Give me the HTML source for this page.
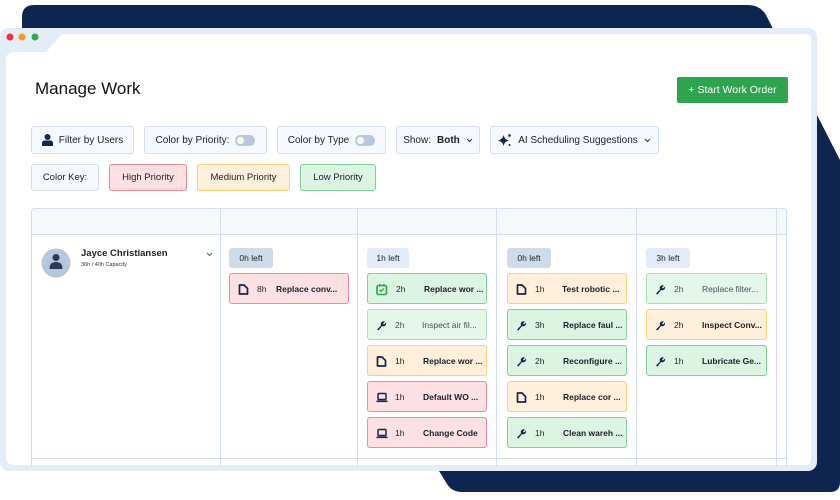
<!DOCTYPE html>
<html><head><meta charset="utf-8">
<style>
*{box-sizing:border-box;margin:0;padding:0}
body{width:840px;height:500px;background:#fff;position:relative;overflow:hidden;font-family:"Liberation Sans",sans-serif;color:#1b1f2a}
.a{position:absolute}
.btn{position:absolute;top:126px;height:28px;background:#f5f8fd;border:1px solid #d5dfee;border-radius:3px;font-size:10px;display:flex;align-items:center;justify-content:center;gap:6px;color:#1b1f2a}
.key{position:absolute;top:164px;height:27px;border:1px solid #d5dfee;border-radius:3px;font-size:9.5px;display:flex;align-items:center;justify-content:center;background:#f5f8fd}
.tog{width:20px;height:11px;border-radius:6px;background:#b9c7dc;position:relative;display:inline-block}
.tog:after{content:"";position:absolute;left:2px;top:2px;width:7px;height:7px;border-radius:50%;background:#fff}
.badge{position:absolute;top:248px;height:20px;border-radius:3px;font-size:8.5px;display:flex;align-items:center;justify-content:center;color:#1b1f2a}
.card{position:absolute;height:31px;border-radius:3px;border:1px solid;font-size:8.5px;font-weight:bold}
.card svg{position:absolute;left:8px;top:10px}
.card .h{position:absolute;top:10px;font-weight:normal}
.card .t{position:absolute;top:10px;white-space:nowrap}
.r{background:#fde0e3;border-color:#f08a94}
.o{background:#ffefdb;border-color:#f6d57e}
.g{background:#dcf5e3;border-color:#82cf98}
.l{background:#e5f7ea;border-color:#a9dfb7;color:#4a4f5a;font-weight:normal!important}
.l .t{font-weight:normal}
</style></head><body>
<svg class="a" style="left:0;top:0" width="840" height="500">
<path d="M34 5 L748 5 Q760 5 766 15 L840 160 L840 482 Q840 492 830 492 L462 492 Q452 492 447 484 L420 440 L22 440 L22 17 Q22 5 34 5Z" fill="#0e2550"/>
<rect x="0" y="28" width="817" height="443" rx="9" fill="#e4ecf8"/>
<path d="M62 34 L805 34 Q811 34 811 40 L811 459 Q811 465 805 465 L14 465 Q6 465 6 457 L6 60 Q6 52 14 52 L46 52 Z" fill="#fff"/>
<circle cx="10" cy="37" r="3.5" fill="#e8323c"/>
<circle cx="22" cy="37" r="3.5" fill="#f39a25"/>
<circle cx="35" cy="37" r="3.5" fill="#2fa84f"/>
<!-- table -->
<rect x="31.5" y="208.5" width="755" height="26" fill="#f5f8fd"/>
<path d="M31.5 466 L31.5 212 Q31.5 208.5 35 208.5 L783 208.5 Q786.5 208.5 786.5 212 L786.5 466" fill="none" stroke="#d3dfee"/>
<line x1="31" y1="234.5" x2="787" y2="234.5" stroke="#d3dfee"/>
<line x1="31" y1="458.5" x2="787" y2="458.5" stroke="#d3dfee"/>
<line x1="220.5" y1="208" x2="220.5" y2="466" stroke="#d3dfee"/>
<line x1="357.5" y1="208" x2="357.5" y2="466" stroke="#d3dfee"/>
<line x1="496.5" y1="208" x2="496.5" y2="466" stroke="#d3dfee"/>
<line x1="636.5" y1="208" x2="636.5" y2="466" stroke="#d3dfee"/>
<line x1="776.5" y1="208" x2="776.5" y2="466" stroke="#d3dfee"/>
<circle cx="56" cy="263" r="14.5" fill="#b6c6dc"/>
<circle cx="56" cy="257.5" r="3.5" fill="#2c3a55"/>
<path d="M49.5 269 Q49.5 262 56 262 Q62.5 262 62.5 269 Z" fill="#2c3a55"/>
<path d="M207 253 L209.5 255.5 L212 253" fill="none" stroke="#4a5568" stroke-width="0.9"/>
</svg>
<div class="a" style="left:35px;top:79px;font-size:17px;font-weight:500;color:#111">Manage Work</div>
<div class="a" style="left:677px;top:77px;width:111px;height:26px;background:#2ea44f;border-radius:2px;color:#fff;font-size:10.5px;display:flex;align-items:center;justify-content:center">+ Start Work Order</div>

<div class="btn" style="left:31px;width:103px"><svg width="11" height="12"><circle cx="5.5" cy="3" r="3" fill="#13294b"/><path d="M0 12 L0 9 Q0 6.5 3 6.5 L8 6.5 Q11 6.5 11 9 L11 12Z" fill="#13294b"/></svg>Filter by Users</div>
<div class="btn" style="left:144px;width:123px">Color by Priority: <span class="tog"></span></div>
<div class="btn" style="left:277px;width:109px">Color by Type <span class="tog"></span></div>
<div class="btn" style="left:396px;width:84px">Show:<b>Both</b><svg width="7" height="5"><path d="M1 1 L3.5 3.5 L6 1" fill="none" stroke="#333" stroke-width="1"/></svg></div>
<div class="btn" style="left:490px;width:169px"><svg width="14" height="14"><path d="M5.5 2 Q6.3 6.5 11 7.5 Q6.3 8.5 5.5 13 Q4.7 8.5 0 7.5 Q4.7 6.5 5.5 2Z" fill="#13294b"/><circle cx="11.5" cy="2.5" r="1.3" fill="#13294b"/><circle cx="11.5" cy="12" r="1" fill="#13294b"/></svg>AI Scheduling Suggestions<svg width="7" height="5"><path d="M1 1 L3.5 3.5 L6 1" fill="none" stroke="#333" stroke-width="1"/></svg></div>

<div class="key" style="left:31px;width:68px">Color Key:</div>
<div class="key" style="left:109px;width:78px;background:#fde0e3;border-color:#ef8a94">High Priority</div>
<div class="key" style="left:197px;width:93px;background:#fff0dc;border-color:#f5d27a">Medium Priority</div>
<div class="key" style="left:300px;width:76px;background:#dcf5e3;border-color:#7fcf94">Low Priority</div>

<div class="a" style="left:81px;top:248px;font-size:9.5px;font-weight:bold">Jayce Christiansen</div>
<div class="a" style="left:81px;top:262px;font-size:5.5px;color:#333">36h / 40h Capacity</div>

<div class="badge" style="left:229px;width:44px;background:#d0dbea">0h left</div>
<div class="badge" style="left:367px;width:42px;background:#e3ebf7">1h left</div>
<div class="badge" style="left:507px;width:44px;background:#d0dbea">0h left</div>
<div class="badge" style="left:646px;width:44px;background:#e3ebf7">3h left</div>

<svg width="0" height="0" style="position:absolute">
<defs>
<g id="doc"><path d="M1.5 1 L6 1 L9.5 4.5 L9.5 10 L1.5 10 Z" fill="none" stroke="#13294b" stroke-width="1.7" stroke-linejoin="round"/></g>
<g id="wr"><path d="M1 9.5 L5 5.5 Q4 2.5 6.5 1.5 Q8 1 9 1.5 L7 3.5 L8 4.5 L10 2.5 Q10.5 5 8.5 6 Q7 6.5 6 6 L2.5 10.5 Z" fill="#13294b"/></g>
<g id="lap"><rect x="2" y="1.5" width="8" height="6" rx="1" fill="none" stroke="#13294b" stroke-width="1.5"/><rect x="0.5" y="8.5" width="11" height="1.6" fill="#13294b"/></g>
<g id="cal"><rect x="1" y="1.5" width="9.5" height="9" rx="1.5" fill="none" stroke="#2ea44f" stroke-width="1.6"/><path d="M3.5 6 L5 7.5 L8 4.5" fill="none" stroke="#2ea44f" stroke-width="1.3"/><rect x="3" y="0" width="1.3" height="2.5" fill="#2ea44f"/><rect x="7.2" y="0" width="1.3" height="2.5" fill="#2ea44f"/></g>
</defs></svg>

<div class="card r" style="left:229px;top:273px;width:120px"><svg width="12" height="12"><use href="#doc"/></svg><span class="h" style="left:27px">8h</span><span class="t" style="left:46px">Replace conv...</span></div>

<div class="card g" style="left:367px;top:273px;width:120px"><svg width="12" height="12"><use href="#cal"/></svg><span class="h" style="left:28px">2h</span><span class="t" style="left:56px">Replace wor ...</span></div>
<div class="card l" style="left:367px;top:309px;width:120px"><svg width="12" height="12"><use href="#wr"/></svg><span class="h" style="left:27px">2h</span><span class="t" style="left:54px">Inspect air fil...</span></div>
<div class="card o" style="left:367px;top:345px;width:120px"><svg width="12" height="12"><use href="#doc"/></svg><span class="h" style="left:27px">1h</span><span class="t" style="left:55px">Replace wor ...</span></div>
<div class="card r" style="left:367px;top:381px;width:120px"><svg width="12" height="12"><use href="#lap"/></svg><span class="h" style="left:27px">1h</span><span class="t" style="left:55px">Default WO ...</span></div>
<div class="card r" style="left:367px;top:417px;width:120px"><svg width="12" height="12"><use href="#lap"/></svg><span class="h" style="left:27px">1h</span><span class="t" style="left:55px">Change Code</span></div>

<div class="card o" style="left:507px;top:273px;width:120px"><svg width="12" height="12"><use href="#doc"/></svg><span class="h" style="left:27px">1h</span><span class="t" style="left:54px">Test robotic ...</span></div>
<div class="card g" style="left:507px;top:309px;width:120px"><svg width="12" height="12"><use href="#wr"/></svg><span class="h" style="left:27px">3h</span><span class="t" style="left:55px">Replace faul ...</span></div>
<div class="card g" style="left:507px;top:345px;width:120px"><svg width="12" height="12"><use href="#wr"/></svg><span class="h" style="left:27px">2h</span><span class="t" style="left:55px">Reconfigure ...</span></div>
<div class="card o" style="left:507px;top:381px;width:120px"><svg width="12" height="12"><use href="#doc"/></svg><span class="h" style="left:27px">1h</span><span class="t" style="left:55px">Replace cor ...</span></div>
<div class="card g" style="left:507px;top:417px;width:120px"><svg width="12" height="12"><use href="#wr"/></svg><span class="h" style="left:27px">1h</span><span class="t" style="left:55px">Clean wareh ...</span></div>

<div class="card l" style="left:646px;top:273px;width:121px"><svg width="12" height="12"><use href="#wr"/></svg><span class="h" style="left:27px">2h</span><span class="t" style="left:55px">Replace filter...</span></div>
<div class="card o" style="left:646px;top:309px;width:121px"><svg width="12" height="12"><use href="#wr"/></svg><span class="h" style="left:27px">2h</span><span class="t" style="left:55px">Inspect Conv...</span></div>
<div class="card g" style="left:646px;top:345px;width:121px"><svg width="12" height="12"><use href="#wr"/></svg><span class="h" style="left:27px">1h</span><span class="t" style="left:55px">Lubricate Ge...</span></div>
</body></html>
